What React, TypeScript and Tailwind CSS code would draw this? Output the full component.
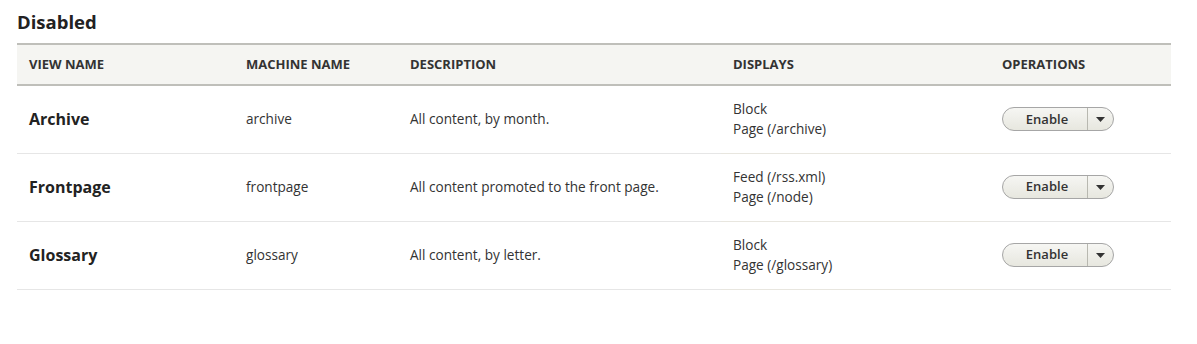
import React from 'react';

type View = {
    name: string;
    machine: string;
    description: string;
    displays: string[];
};

const views: View[] = [
    { name: 'Archive', machine: 'archive', description: 'All content, by month.', displays: ['Block', 'Page (/archive)'] },
    { name: 'Frontpage', machine: 'frontpage', description: 'All content promoted to the front page.', displays: ['Feed (/rss.xml)', 'Page (/node)'] },
    { name: 'Glossary', machine: 'glossary', description: 'All content, by letter.', displays: ['Block', 'Page (/glossary)'] },
];

function EnableButton() {
    return (
        <div className="inline-flex h-[24px] items-stretch rounded-full border border-[#a6a6a6] bg-gradient-to-b from-[#f6f6f3] to-[#e7e7df] text-[#333]">
            <button className="w-[84px] pl-1 text-[13px] font-semibold">Enable</button>
            <span className="flex w-[26px] items-center justify-center border-l border-[#b8b8b0]">
                <svg width="9" height="5" viewBox="0 0 9 5">
                    <path d="M0 0h9L4.5 5z" fill="#333" />
                </svg>
            </span>
        </div>
    );
}

export default function App() {
    return (
        <div className="min-h-[344px] bg-white px-[17px] pt-[11px] text-[#333]" style={{ fontFamily: '"Open Sans", "Liberation Sans", sans-serif' }}>
            <h2 className="mb-[10px] text-[18.5px] font-bold leading-[22px] text-[#222]">Disabled</h2>
            <table className="w-[1154px] border-collapse text-left">
                <thead>
                    <tr className="h-[41px] border-y-2 border-[#bfbfba] bg-[#f5f5f2] text-[13px] font-bold uppercase text-[#333]">
                        <th className="w-[217px] px-3">View name</th>
                        <th className="w-[164px] px-3">Machine name</th>
                        <th className="w-[323px] px-3">Description</th>
                        <th className="w-[269px] px-3">Displays</th>
                        <th className="px-3">Operations</th>
                    </tr>
                </thead>
                <tbody>
                    {views.map((view) => (
                        <tr key={view.machine} className="h-[68px] border-b border-[#e6e6e6] text-[13.6px]">
                            <td className="px-3 text-[16px] font-bold text-[#222]">{view.name}</td>
                            <td className="px-3">{view.machine}</td>
                            <td className="px-3">{view.description}</td>
                            <td className="border-b border-[#e8e6df] px-3 leading-[20px]">
                                {view.displays.map((d) => (
                                    <div key={d}>{d}</div>
                                ))}
                            </td>
                            <td className="px-3">
                                <EnableButton />
                            </td>
                        </tr>
                    ))}
                </tbody>
            </table>
        </div>
    );
}
